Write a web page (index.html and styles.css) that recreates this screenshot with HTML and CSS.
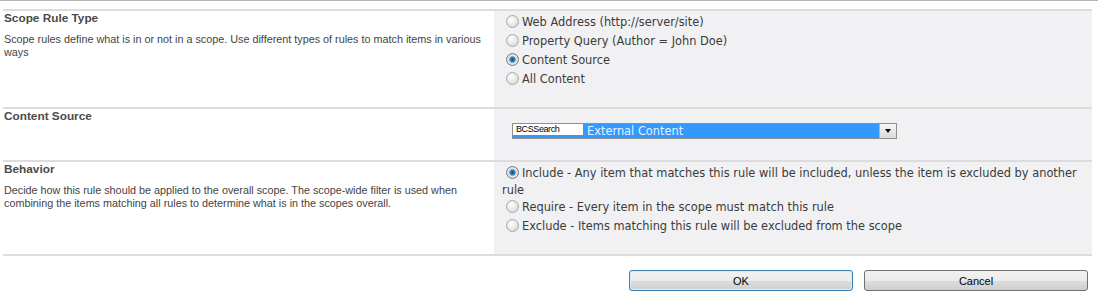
FILE: index.html
```html
<!DOCTYPE html>
<html lang="en">
<head>
  <meta charset="UTF-8">
  <title>Add Scope Rule</title>
  <link rel="stylesheet" href="styles.css">
</head>
<body>
  <div class="topline"></div>

  <div class="form">
    <div class="row row-type">
      <div class="label-cell">
        <h3>Scope Rule Type</h3>
        <p>Scope rules define what is in or not in a scope. Use different types of rules to match items in various ways</p>
      </div>
      <div class="input-cell">
        <label class="opt"><span class="radio"></span>Web Address (http://server/site)</label>
        <label class="opt"><span class="radio"></span>Property Query (Author = John Doe)</label>
        <label class="opt"><span class="radio checked"></span>Content Source</label>
        <label class="opt"><span class="radio"></span>All Content</label>
      </div>
    </div>

    <div class="row row-source">
      <div class="label-cell">
        <h3>Content Source</h3>
      </div>
      <div class="input-cell">
        <div class="select">
          <span class="sel-ghost">BCSSearch</span>
          <span class="sel-value">External Content</span>
          <span class="sel-arrow"></span>
        </div>
      </div>
    </div>

    <div class="row row-behavior">
      <div class="label-cell">
        <h3>Behavior</h3>
        <p>Decide how this rule should be applied to the overall scope. The scope-wide filter is used when combining the items matching all rules to determine what is in the scopes overall.</p>
      </div>
      <div class="input-cell behavior">
        <div class="opt-wrap"><span class="radio checked"></span>Include - Any item that matches this rule will be included, unless the item is excluded by another rule</div>
        <label class="opt"><span class="radio"></span>Require - Every item in the scope must match this rule</label>
        <label class="opt"><span class="radio"></span>Exclude - Items matching this rule will be excluded from the scope</label>
      </div>
    </div>
  </div>

  <div class="buttons">
    <button class="btn btn-ok">OK</button>
    <button class="btn">Cancel</button>
  </div>
</body>
</html>
```

FILE: styles.css
```css
body {
  margin: 0;
  background: #fff;
  font-family: 'DejaVu Sans', Verdana, sans-serif;
  color: #3b3b3b;
}

.topline {
  height: 8px;
  border-top: 1px solid #b5b5b5;
}

.form {
  margin-left: 3px;
  width: 1089px;
  border-bottom: 2px solid #dcdcdc;
}

.row {
  display: grid;
  grid-template-columns: 491px 1fr;
  border-top: 2px solid #dcdcdc;
}

.row-type { height: 96px; }
.row-source { height: 51px; }
.row-behavior { height: 92px; }

.label-cell {
  padding: 0 4px 0 1px;
  font-family: 'Liberation Sans', Tahoma, sans-serif;
}

h3 {
  margin: 0;
  font-size: 11.8px;
  line-height: 14px;
  font-weight: bold;
  color: #4a4a4a;
}

.label-cell p {
  margin: 8px 0 0;
  font-size: 10.8px;
  line-height: 13px;
  color: #444;
}

.input-cell {
  background: #f1f1f3;
  padding: 1px 4px 0 8px;
  font-size: 11.4px;
}

.opt {
  display: flex;
  align-items: center;
  height: 19px;
  margin-left: 4px;
}

.radio {
  display: inline-block;
  width: 11px;
  height: 11px;
  border: 1px solid #a9a9a9;
  border-radius: 50%;
  background: radial-gradient(circle at 40% 35%, #ffffff 0%, #e6e6e6 55%, #cfcfcf 100%);
  margin-right: 3px;
  flex-shrink: 0;
  box-sizing: content-box;
}

.radio.checked {
  border-color: #6d7f92;
  background: radial-gradient(circle, #1a4f78 0%, #2f7bb3 28%, #6aa4cf 38%, #e6e6e6 48%, #d0d0d0 100%);
}

.row-source .input-cell {
  padding-top: 14px;
  padding-left: 18px;
}

.select {
  display: flex;
  width: 383px;
  height: 14px;
  border: 1px solid #8e8f8f;
  background: #3399ff;
}

.sel-ghost {
  width: 70px;
  background: #fff;
  color: #000;
  font-family: 'Liberation Sans', Arial, sans-serif;
  font-size: 9px;
  letter-spacing: -0.4px;
  line-height: 10px;
  padding-left: 3px;
  border-bottom: 3px solid #3399ff;
  box-sizing: border-box;
}

.sel-value {
  flex: 1;
  color: #e4f3ff;
  font-size: 11.4px;
  line-height: 14px;
  padding-left: 4px;
}

.sel-arrow {
  width: 16px;
  border-left: 1px solid #b5b5b5;
  background: linear-gradient(#f7f7f7, #d9d9d9);
  position: relative;
}

.sel-arrow::after {
  content: "";
  position: absolute;
  left: 5px;
  top: 5px;
  border-left: 3px solid transparent;
  border-right: 3px solid transparent;
  border-top: 4px solid #000;
}

.behavior {
  padding-left: 8px;
  padding-top: 3px;
}

.opt-wrap {
  line-height: 17px;
  margin-bottom: -2px;
}

.opt-wrap .radio {
  vertical-align: -2px;
  margin-left: 4px;
}

.behavior .opt {
  height: 19px;
  margin-left: 4px;
}

.buttons {
  display: flex;
  gap: 11px;
  padding: 14px 0 0 629px;
}

.btn {
  width: 224px;
  height: 21px;
  border: 1px solid #707070;
  border-radius: 3px;
  background: linear-gradient(#f2f2f2 0%, #ebebeb 50%, #dddddd 51%, #cfcfcf 100%);
  font-family: 'Liberation Sans', Tahoma, sans-serif;
  font-size: 11px;
  color: #000;
  padding: 0;
}

.btn-ok {
  border-color: #3c7fb1;
  box-shadow: inset 0 0 0 1px #d6ecfa;
}
```
